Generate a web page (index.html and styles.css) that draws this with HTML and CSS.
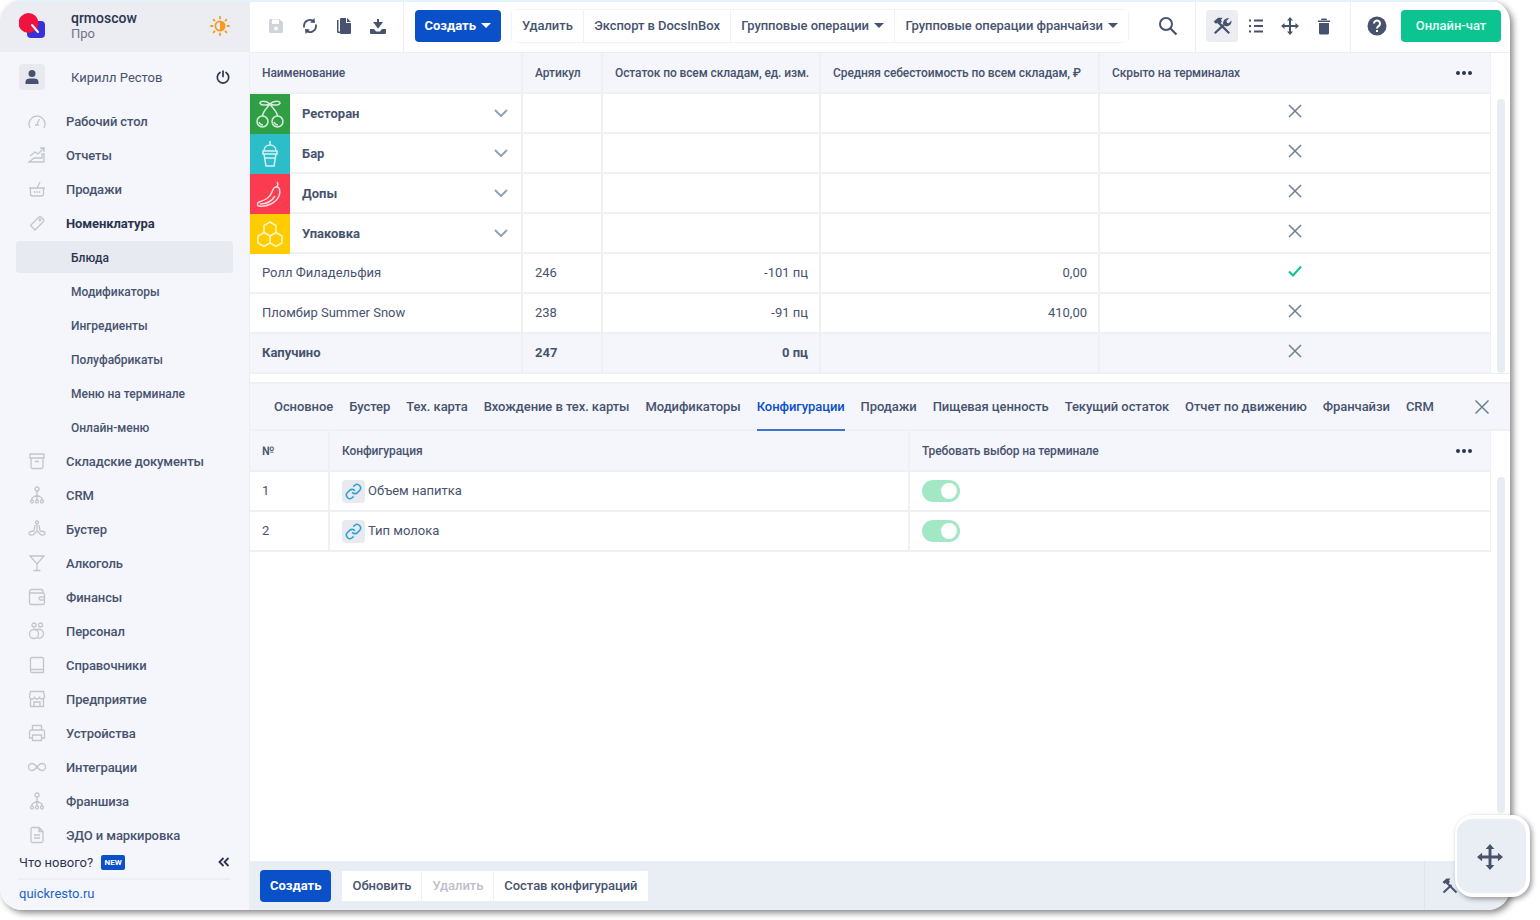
FILE: index.html
```html
<!DOCTYPE html>
<html lang="ru">
<head>
  <meta charset="UTF-8">
  <title>Номенклатура</title>
  <link rel="stylesheet" href="styles.css">
</head>
<body>
  <div class="window">
    <aside class="sidebar">
      <div class="brand">
        <svg class="logo" width="28" height="28" viewBox="0 0 28 28"><rect x="8" y="9" width="18" height="17" rx="4" fill="#3b2fd6"/><circle cx="9.500" cy="11" r="10" fill="#f0123f"/><path d="M13 13l6 7" stroke="#fff" stroke-width="2" stroke-linecap="round"/></svg>
        <div class="brand-text">
          <div class="brand-name">qrmoscow</div>
          <div class="brand-plan">Про</div>
        </div>
        <svg class="sun" width="20" height="20" viewBox="0 0 20 20"><circle cx="10" cy="10" r="4.600" fill="none" stroke="#f59a23" stroke-width="1.800"/><path d="M10 5.400a4.600 4.600 0 0 1 0 9.200z" fill="#f59a23"/><path d="M10 1v1.500M10 17.500V19M1 10h1.500M17.500 10H19M3.600 3.600l1 1M15.400 15.400l1 1M3.600 16.400l1-1M15.400 4.600l1-1" stroke="#f59a23" stroke-width="1.800" stroke-linecap="round"/></svg>
      </div>
      <div class="user">
        <span class="avatar"><svg width="16" height="16" viewBox="0 0 16 16"><circle cx="8" cy="4.500" r="3.500" fill="#47536e"/><path d="M1.500 15v-2c0-2.500 2-3.500 4-3.500h5c2 0 4 1 4 3.500v2z" fill="#47536e"/></svg></span>
        <span class="user-name">Кирилл Рестов</span>
        <svg width="14" height="14" viewBox="0 0 14 14"><path d="M4 2.500a5.700 5.700 0 1 0 6 0" fill="none" stroke="#2b3550" stroke-width="1.700" stroke-linecap="round"/><path d="M7 1v5.500" stroke="#2b3550" stroke-width="1.700" stroke-linecap="round"/></svg>
      </div>
      <nav class="nav">
        <a class="nav-item"><svg class="nav-icon" viewBox="0 0 20 20"><path d="M3 17a8 8 0 1 1 14 0M10 13l2.500-5M8 14h4"/></svg>Рабочий стол</a>
        <a class="nav-item"><svg class="nav-icon" viewBox="0 0 20 20"><path d="M3 11l5-4 3 2 6-6M13 3h4v4M2 17l5-4h8V9h2v8z"/></svg>Отчеты</a>
        <a class="nav-item"><svg class="nav-icon" viewBox="0 0 20 20"><path d="M2 9h16M3.500 9v6a2 2 0 0 0 2 2h9a2 2 0 0 0 2-2V9M13 3l-3 6M7.500 12v2M10 12v2M12.500 12v2"/></svg>Продажи</a>
        <a class="nav-item is-bold"><svg class="nav-icon" viewBox="0 0 20 20"><path d="M3.500 12.500l8-8c1-1 2-1 3 0l1.500 1.500c1 1 1 2 0 3l-8 8z"/><circle cx="13" cy="7" r=".8"/></svg>Номенклатура</a>
        <a class="nav-sub is-active">Блюда</a>
        <a class="nav-sub">Модификаторы</a>
        <a class="nav-sub">Ингредиенты</a>
        <a class="nav-sub">Полуфабрикаты</a>
        <a class="nav-sub">Меню на терминале</a>
        <a class="nav-sub">Онлайн-меню</a>
        <a class="nav-item"><svg class="nav-icon" viewBox="0 0 20 20"><path d="M3 3h14v4H3zM4 7v9a1.500 1.500 0 0 0 1.500 1.500h9A1.500 1.500 0 0 0 16 16V7M8 10.500h4"/></svg>Складские документы</a>
        <a class="nav-item"><svg class="nav-icon" viewBox="0 0 20 20"><circle cx="10" cy="4" r="2"/><path d="M10 6v4M5 15v-2l5-3 5 3v2M10 10v5"/><circle cx="5" cy="16.500" r="1.500"/><circle cx="10" cy="16.500" r="1.500"/><circle cx="15" cy="16.500" r="1.500"/></svg>CRM</a>
        <a class="nav-item"><svg class="nav-icon" viewBox="0 0 20 20"><circle cx="10" cy="3.500" r="1.500"/><path d="M10 5v7M8 6l-1 6c-3 0-5 1-5 2.500S5 17 7 15l3-3 3 3c2 2 5 1 5-.5S16 12 13 12l-1-6"/></svg>Бустер</a>
        <a class="nav-item"><svg class="nav-icon" viewBox="0 0 20 20"><path d="M3 3h14l-7 8zM10 11v6M6.500 17.500h7"/></svg>Алкоголь</a>
        <a class="nav-item"><svg class="nav-icon" viewBox="0 0 20 20"><path d="M16 6V4a1.500 1.500 0 0 0-1.500-1.500h-10A2 2 0 0 0 2.500 4.500v11A2 2 0 0 0 4.500 17.500h11a2 2 0 0 0 2-2V8a2 2 0 0 0-2-2zM2.500 6H16M18 10h-4.500a1.500 1.500 0 0 0 0 3H18"/></svg>Финансы</a>
        <a class="nav-item"><svg class="nav-icon" viewBox="0 0 20 20"><circle cx="7" cy="4" r="2"/><circle cx="13.500" cy="4" r="2"/><circle cx="7" cy="13" r="4.500"/><path d="M10.500 8.500a4.500 4.500 0 1 1 0 8.500M6 8.500h8"/></svg>Персонал</a>
        <a class="nav-item"><svg class="nav-icon" viewBox="0 0 20 20"><path d="M5 2.500h10a1.500 1.500 0 0 1 1.500 1.500v13.500H5A1.500 1.500 0 0 1 3.500 16V4A1.500 1.500 0 0 1 5 2.500zM3.500 14.500H16.500"/></svg>Справочники</a>
        <a class="nav-item"><svg class="nav-icon" viewBox="0 0 20 20"><path d="M3.500 2.500h13l1 5a2.500 2.500 0 0 1-5 0 2.500 2.500 0 0 1-5 0 2.500 2.500 0 0 1-5 0zM3.500 10v7.500h13V10M7 17.500V13h6v4.500"/></svg>Предприятие</a>
        <a class="nav-item"><svg class="nav-icon" viewBox="0 0 20 20"><path d="M5.500 7V2.500h9V7M5.500 15H2.500V9a2 2 0 0 1 2-2h11a2 2 0 0 1 2 2v6h-3M5.500 12h9v5.500h-9z"/></svg>Устройства</a>
        <a class="nav-item"><svg class="nav-icon" viewBox="0 0 20 20"><path d="M10 10c-2-2.500-3.500-3.500-5-3.500a3.500 3.500 0 0 0 0 7c1.500 0 3-1 5-3.500s3.500-3.500 5-3.500a3.500 3.500 0 0 1 0 7c-1.500 0-3-1-5-3.500z"/></svg>Интеграции</a>
        <a class="nav-item"><svg class="nav-icon" viewBox="0 0 20 20"><circle cx="10" cy="4" r="2"/><path d="M10 6v4M5 15v-2l5-3 5 3v2M10 10v5"/><circle cx="5" cy="16.500" r="1.500"/><circle cx="10" cy="16.500" r="1.500"/><circle cx="15" cy="16.500" r="1.500"/></svg>Франшиза</a>
        <a class="nav-item"><svg class="nav-icon" viewBox="0 0 20 20"><path d="M5 2.500h7l4 4V16a1.500 1.500 0 0 1-1.500 1.500h-9A1.500 1.500 0 0 1 4 16V4A1.500 1.500 0 0 1 5 2.500zM12 2.500v4h4M7 10h6M7 13h6"/></svg>ЭДО и маркировка</a>
      </nav>
      <div class="side-foot">
        <div class="news">
          <span>Что нового?</span>
          <span class="badge">NEW</span>
          <svg class="collapse" width="12" height="10" viewBox="0 0 12 10"><path d="M5.500 1L1.500 5l4 4M10.500 1l-4 4 4 4" fill="none" stroke="#2b3550" stroke-width="1.800"/></svg>
        </div>
        <a class="site-link">quickresto.ru</a>
      </div>
    </aside>

    <main class="content">
      <header class="toolbar">
        <div class="tool-group">
          <svg class="tool" viewBox="0 0 18 18"><path d="M2 3.500A1.500 1.500 0 0 1 3.500 2h9L16 5.500v9a1.500 1.500 0 0 1-1.500 1.500h-11A1.500 1.500 0 0 1 2 14.500zM5 2.500V7h7V2.500z" fill="#cfd3da" fill-rule="evenodd"/><circle cx="9" cy="11.500" r="2" fill="#fff"/></svg>
          <svg class="tool" viewBox="0 0 18 18"><path d="M3 10.500V9a6 6 0 0 1 9.500-4.900M15 7.500V9a6 6 0 0 1-9.500 4.900" fill="none" stroke="#47536e" stroke-width="1.800"/><path d="M13.500 1l.5 5-5-.5zM4.500 17l-.5-5 5 .5z" fill="#47536e"/></svg>
          <svg class="tool" viewBox="0 0 18 18"><path d="M2 3h1.500v11.500H11V16H3.500A1.500 1.500 0 0 1 2 14.500z" fill="#47536e"/><path d="M6 1h5v5h5v10a1 1 0 0 1-1 1H6a1 1 0 0 1-1-1V2a1 1 0 0 1 1-1zM12 1l4 4h-4z" fill="#47536e"/></svg>
          <svg class="tool" viewBox="0 0 18 18"><path d="M9 2v6M6 6l3 4 3-4z" fill="#47536e" stroke="#47536e" stroke-width="2"/><path d="M1 12h4l2 2.500h4l2-2.500h4v4a1 1 0 0 1-1 1H2a1 1 0 0 1-1-1z" fill="#47536e"/></svg>
        </div>
        <div class="action-group">
          <button class="btn-primary">Создать <span class="caret"></span></button>
          <div class="btn-row">
            <button class="btn">Удалить</button>
            <button class="btn">Экспорт в DocsInBox</button>
            <button class="btn">Групповые операции <span class="caret is-dark"></span></button>
            <button class="btn">Групповые операции франчайзи <span class="caret is-dark"></span></button>
          </div>
          <svg class="search" width="20" height="20" viewBox="0 0 20 20"><circle cx="8" cy="8" r="6" fill="none" stroke="#47536e" stroke-width="2"/><path d="M12.500 12.500L18.500 18.500" stroke="#47536e" stroke-width="2.200"/></svg>
        </div>
        <div class="tool-group is-view">
          <span class="tool-on"><svg class="tool-big" viewBox="0 0 18 18"><path d="M5.500 5.500L15.500 15.500" stroke="#47536e" stroke-width="2" fill="none"/><path d="M1.500 5L5.500 1.500H9.500L8 3.500 9 5 6.500 7.500 5 6 3.500 7z" fill="#47536e"/><path d="M2.500 15.500L10.500 8" stroke="#47536e" stroke-width="2" fill="none"/><path d="M10 7.500C9.500 4 12 1.500 15.500 2L13 4.500l.5 1.500 1.500.5L17.500 4C18 7.500 15 10 11.500 9z" fill="#47536e"/></svg></span>
          <svg class="tool" viewBox="0 0 18 18"><path d="M7 3.500h9M7 9h9M7 14.500h9" stroke="#47536e" stroke-width="1.800"/><path d="M2 2.500h2v2H2zM2 8h2v2H2zM2 13.500h2v2H2z" fill="#47536e"/></svg>
          <svg class="tool" viewBox="0 0 18 18"><path d="M9 0l3 3.500H10V8h4.500V6L18 9l-3.500 3v-2H10v4.500h2L9 18l-3-3.500h2V10H3.500v2L0 9l3.500-3v2H8V3.500H6z" fill="#47536e"/></svg>
          <svg class="tool" viewBox="0 0 18 18"><path d="M3 3.500h12V5H3zM6.500 1.500h5l.5 1.500H6zM4 6h10v10a1.500 1.500 0 0 1-1.500 1.500h-7A1.500 1.500 0 0 1 4 16z" fill="#47536e"/></svg>
        </div>
        <div class="help-group">
          <svg class="help" width="20" height="20" viewBox="0 0 20 20"><circle cx="10" cy="10" r="9.500" fill="#47536e"/><path d="M7 7.500a3 3 0 1 1 4.500 2.600c-1 .6-1.500 1-1.500 2.400" fill="none" stroke="#fff" stroke-width="2"/><rect x="9" y="14" width="2" height="2" fill="#fff"/></svg>
          <button class="btn-chat">Онлайн-чат</button>
        </div>
      </header>

      <section class="upper">
        <table class="grid grid-top">
          <colgroup><col class="c-name"><col class="c-art"><col class="c-stock"><col class="c-cost"><col></colgroup>
          <thead>
            <tr>
              <th>Наименование</th>
              <th>Артикул</th>
              <th>Остаток по всем складам, ед. изм.</th>
              <th>Средняя себестоимость по всем складам, ₽</th>
              <th class="has-more">Скрыто на терминалах<span class="more"><i></i><i></i><i></i></span></th>
            </tr>
          </thead>
          <tbody>
            <tr>
              <td class="folder">
                <div class="folder-cell">
                  <span class="tile tile-green"><svg class="tile-icon" viewBox="0 0 30 30"><circle cx="7.500" cy="22.500" r="5.500"/><circle cx="22.500" cy="22.500" r="5.500"/><path d="M7.500 17C8 12 12 9 15 5c2 4 7 7 7.500 12M15 5C11 1 5 2 5 4s6 3 10 1c4-4 10-3 10-1s-6 3-10 1M4 23c1 2 2 3 4 3M19 23c1 2 2 3 4 3"/></svg></span>
                  <b>Ресторан</b>
                  <svg class="chev" width="14" height="8" viewBox="0 0 14 8"><path d="M1 1l6 6 6-6"/></svg>
                </div>
              </td>
              <td></td><td></td><td></td>
              <td class="mark"><svg class="cross" viewBox="0 0 14 14"><path d="M1 1l12 12M13 1L1 13"/></svg></td>
            </tr>
            <tr>
              <td class="folder">
                <div class="folder-cell">
                  <span class="tile tile-cyan"><svg class="tile-icon" viewBox="0 0 30 30"><path d="M8 12h14v3H8zM9 15l2 12h8l2-12M9 12c0-4 3-6 6-6s6 2 6 6M15 6V2M10 19h10"/></svg></span>
                  <b>Бар</b>
                  <svg class="chev" width="14" height="8" viewBox="0 0 14 8"><path d="M1 1l6 6 6-6"/></svg>
                </div>
              </td>
              <td></td><td></td><td></td>
              <td class="mark"><svg class="cross" viewBox="0 0 14 14"><path d="M1 1l12 12M13 1L1 13"/></svg></td>
            </tr>
            <tr>
              <td class="folder">
                <div class="folder-cell">
                  <span class="tile tile-red"><svg class="tile-icon" viewBox="0 0 30 30"><path d="M21 8c-2 0-3 2-4 5-2 6-7 8-13 10-2 1-2 4 0 4 8 1 17-3 20-10 1-3 1-6 0-8-1-1-2-1-3-1zM22 8c1-2 1-4 0-5M5 25c6 0 12-3 15-8"/></svg></span>
                  <b>Допы</b>
                  <svg class="chev" width="14" height="8" viewBox="0 0 14 8"><path d="M1 1l6 6 6-6"/></svg>
                </div>
              </td>
              <td></td><td></td><td></td>
              <td class="mark"><svg class="cross" viewBox="0 0 14 14"><path d="M1 1l12 12M13 1L1 13"/></svg></td>
            </tr>
            <tr>
              <td class="folder">
                <div class="folder-cell">
                  <span class="tile tile-yellow"><svg class="tile-icon" viewBox="0 0 30 30"><path d="M15 3l6 3.500v7L15 17l-6-3.500v-7zM9 13.500l6 3.500v7l-6 3.500-6-3.500v-7zM21 13.500l6 3.500v7l-6 3.500-6-3.500v-7z"/></svg></span>
                  <b>Упаковка</b>
                  <svg class="chev" width="14" height="8" viewBox="0 0 14 8"><path d="M1 1l6 6 6-6"/></svg>
                </div>
              </td>
              <td></td><td></td><td></td>
              <td class="mark"><svg class="cross" viewBox="0 0 14 14"><path d="M1 1l12 12M13 1L1 13"/></svg></td>
            </tr>
            <tr>
              <td>Ролл Филадельфия</td><td>246</td><td class="num">-101 пц</td><td class="num">0,00</td>
              <td class="mark"><svg class="check" viewBox="0 0 14 12"><path d="M1 6.500L5 10.500 13 1.500"/></svg></td>
            </tr>
            <tr>
              <td>Пломбир Summer Snow</td><td>238</td><td class="num">-91 пц</td><td class="num">410,00</td>
              <td class="mark"><svg class="cross" viewBox="0 0 14 14"><path d="M1 1l12 12M13 1L1 13"/></svg></td>
            </tr>
            <tr class="row-sel">
              <td>Капучино</td><td>247</td><td class="num">0 пц</td><td></td>
              <td class="mark"><svg class="cross" viewBox="0 0 14 14"><path d="M1 1l12 12M13 1L1 13"/></svg></td>
            </tr>
          </tbody>
        </table>
        <div class="scroll scroll-top"><span></span></div>
      </section>

      <section class="lower">
        <div class="tabs">
          <a class="tab">Основное</a>
          <a class="tab">Бустер</a>
          <a class="tab">Тех. карта</a>
          <a class="tab">Вхождение в тех. карты</a>
          <a class="tab">Модификаторы</a>
          <a class="tab is-active">Конфигурации</a>
          <a class="tab">Продажи</a>
          <a class="tab">Пищевая ценность</a>
          <a class="tab">Текущий остаток</a>
          <a class="tab">Отчет по движению</a>
          <a class="tab">Франчайзи</a>
          <a class="tab">CRM</a>
          <svg class="tabs-close" width="16" height="16" viewBox="0 0 16 16"><path d="M1.500 1.500l13 13M14.500 1.500l-13 13" stroke="#6d7f94" stroke-width="1.500"/></svg>
        </div>
        <div class="lower-body">
          <table class="grid grid-sub">
            <colgroup><col class="c-no"><col class="c-conf"><col></colgroup>
            <thead>
              <tr>
                <th>№</th>
                <th>Конфигурация</th>
                <th class="has-more">Требовать выбор на терминале<span class="more"><i></i><i></i><i></i></span></th>
              </tr>
            </thead>
            <tbody>
              <tr>
                <td>1</td>
                <td class="conf-cell"><span class="conf"><span class="link-box"><svg width="17" height="17" viewBox="0 0 24 24"><path d="M10 13a5 5 0 0 0 7.540.54l3-3a5 5 0 0 0-7.070-7.070l-1.720 1.710"/><path d="M14 11a5 5 0 0 0-7.540-.54l-3 3a5 5 0 0 0 7.070 7.070l1.710-1.710"/></svg></span><span class="conf-name">Объем напитка</span></span></td>
                <td class="switch-cell"><span class="switch"></span></td>
              </tr>
              <tr>
                <td>2</td>
                <td class="conf-cell"><span class="conf"><span class="link-box"><svg width="17" height="17" viewBox="0 0 24 24"><path d="M10 13a5 5 0 0 0 7.540.54l3-3a5 5 0 0 0-7.070-7.070l-1.720 1.710"/><path d="M14 11a5 5 0 0 0-7.540-.54l-3 3a5 5 0 0 0 7.070 7.070l1.710-1.710"/></svg></span><span class="conf-name">Тип молока</span></span></td>
                <td class="switch-cell"><span class="switch"></span></td>
              </tr>
            </tbody>
          </table>
          <div class="scroll scroll-sub"><span></span></div>
        </div>
      </section>

      <footer class="bottom">
        <button class="btn-primary">Создать</button>
        <div class="btn-row is-flat">
          <button class="btn">Обновить</button>
          <button class="btn is-off">Удалить</button>
          <button class="btn">Состав конфигураций</button>
        </div>
        <div class="bottom-tools">
          <svg class="tool" viewBox="0 0 18 18"><path d="M5.500 5.500L15.500 15.500" stroke="#47536e" stroke-width="2" fill="none"/><path d="M1.500 5L5.500 1.500H9.500L8 3.500 9 5 6.500 7.500 5 6 3.500 7z" fill="#47536e"/><path d="M2.500 15.500L10.500 8" stroke="#47536e" stroke-width="2" fill="none"/></svg>
        </div>
      </footer>
    </main>

    <div class="float-move">
      <svg class="float-icon" width="26" height="26" viewBox="0 0 18 18"><path d="M9 0l3 3.500H10V8h4.500V6L18 9l-3.500 3v-2H10v4.500h2L9 18l-3-3.500h2V10H3.500v2L0 9l3.500-3v2H8V3.500H6z" fill="#47536e"/></svg>
    </div>
  </div>
</body>
</html>
```

FILE: styles.css
```css
* {
  box-sizing: border-box;
}
html, body {
  margin: 0;
  height: 100%;
}
body {
  background-color: #fff;
  font-family: Roboto, "Noto Sans", sans-serif;
  font-size: 13px;
  color: #47536e;
  overflow: hidden;
}
button {
  font: inherit;
  cursor: pointer;
}
.window {
  position: relative;
  display: flex;
  width: 1510px;
  height: 910px;
  border-radius: 22px;
  background-color: #fff;
  box-shadow: 3px 3px 6px rgba(60, 60, 60, 0.6);
}

/* sidebar */
.sidebar {
  width: 250px;
  flex: none;
  display: flex;
  flex-direction: column;
  background-color: #f5f6fb;
  border-right: 1px solid #eceef3;
  border-radius: 22px 0 0 22px;
  overflow: hidden;
}
.brand {
  height: 52px;
  flex: none;
  display: flex;
  align-items: center;
  padding: 0 19px;
  background-color: #ecedf2;
  box-shadow: inset 0 2px 0 #e3f3fc;
}
.logo {
  flex: none;
}
.brand-text {
  flex: 1;
  margin-left: 24px;
  line-height: 15px;
}
.brand-name {
  font-size: 14px;
  font-weight: 500;
  color: #2b3550;
}
.brand-plan {
  font-size: 13px;
  color: #6d7588;
}
.user {
  height: 50px;
  flex: none;
  display: flex;
  align-items: center;
  padding: 0 19px;
}
.avatar {
  width: 26px;
  height: 26px;
  flex: none;
  display: flex;
  align-items: center;
  justify-content: center;
  border-radius: 4px;
  background-color: #e8eaf0;
}
.user-name {
  flex: 1;
  margin-left: 26px;
}
.nav {
  flex: 1;
  display: flex;
  flex-direction: column;
  padding-top: 2px;
  overflow: hidden;
}
.nav-item {
  height: 34px;
  flex: none;
  display: flex;
  align-items: center;
  padding-left: 27px;
  font-weight: 500;
  color: #47536e;
  letter-spacing: -0.1px;
}
.nav-item.is-bold {
  color: #2b3550;
  font-weight: 700;
}
.nav-icon {
  width: 20px;
  height: 20px;
  flex: none;
  margin-right: 19px;
  fill: none;
  stroke: #c2c5ce;
  stroke-width: 1.300;
}
.nav-sub {
  height: 32px;
  flex: none;
  margin: 1px 16px;
  display: flex;
  align-items: center;
  padding: 1px 0 0 55px;
  border-radius: 4px;
  font-size: 12px;
  font-weight: 500;
  color: #47536e;
}
.nav-sub.is-active {
  background-color: #e8eaf1;
  color: #2b3550;
}
.side-foot {
  flex: none;
  height: 60px;
  padding: 0 19px;
  background-color: #f5f6fb;
}
.news {
  height: 30px;
  display: flex;
  align-items: center;
  padding-bottom: 4px;
  border-bottom: 2px solid #eceef3;
  color: #2b3550;
}
.badge {
  width: 24px;
  height: 15px;
  margin-left: 8px;
  border-radius: 2px;
  background-color: #0a50c8;
  color: #fff;
  font-size: 8px;
  font-weight: 700;
  line-height: 15px;
  text-align: center;
}
.collapse {
  margin-left: auto;
}
.site-link {
  display: block;
  margin-top: 6px;
  color: #1b62c8;
}

/* main area */
.content {
  flex: 1;
  min-width: 0;
  display: flex;
  flex-direction: column;
  border-radius: 0 22px 22px 0;
  overflow: hidden;
}
.toolbar {
  height: 53px;
  flex: none;
  display: flex;
  align-items: stretch;
  border-bottom: 1px solid #eceef3;
  box-shadow: inset 0 2px 0 #e3f3fc;
}
.tool-group {
  width: 154px;
  flex: none;
  display: flex;
  align-items: center;
  gap: 16px;
  padding: 0 0 0 17px;
  border-right: 1px solid #eceef3;
}
.tool {
  width: 18px;
  height: 18px;
  flex: none;
}
.tool-big {
  width: 20px;
  height: 20px;
}
.action-group {
  width: 792px;
  flex: none;
  display: flex;
  align-items: center;
  padding-left: 11px;
  border-right: 1px solid #eceef3;
}
.btn-primary {
  height: 32px;
  padding: 0 9.500px 1px;
  border: 0;
  border-radius: 4px;
  background-color: #0a50c8;
  color: #fff;
  font-weight: 700;
}
.caret {
  display: inline-block;
  margin-left: 2px;
  vertical-align: 2px;
  border-left: 5px solid transparent;
  border-right: 5px solid transparent;
  border-top: 5px solid #fff;
}
.caret.is-dark {
  border-top-color: #47536e;
}
.btn-row {
  display: flex;
  height: 32px;
  margin-left: 11px;
  border-radius: 4px;
  box-shadow: 0 0 2px rgba(70, 80, 110, 0.25);
}
.btn {
  height: 100%;
  padding: 0 10.200px 2px;
  border: 0;
  border-right: 1px solid #eef0f4;
  background-color: #fff;
  color: #47536e;
  white-space: nowrap;
  font-weight: 500;
  letter-spacing: -0.05px;
}
.btn:last-child {
  border-right: 0;
}
.btn.is-off {
  color: #bcc0ca;
}
.search {
  margin-left: 30px;
}
.tool-group.is-view {
  width: 155px;
  gap: 16px;
  padding-left: 10px;
}
.tool-on {
  width: 32px;
  height: 32px;
  margin-right: -7px;
  display: flex;
  align-items: center;
  justify-content: center;
  border-radius: 4px;
  background-color: #ecedf2;
}
.help-group {
  flex: 1;
  display: flex;
  align-items: center;
  padding-left: 16px;
}
.btn-chat {
  height: 32px;
  width: 100px;
  margin-left: 14px;
  padding-bottom: 2px;
  border: 0;
  border-radius: 4px;
  background-color: #0bc48f;
  color: #e8fff8;
  font-weight: 500;
}

/* tables */
.upper {
  position: relative;
  height: 321px;
  flex: none;
  padding-right: 19px;
  border-bottom: 1px solid #eceef3;
}
.grid {
  width: 100%;
  table-layout: fixed;
  border-collapse: collapse;
}
.c-name { width: 272px; }
.c-art { width: 80px; }
.c-stock { width: 218px; }
.c-cost { width: 279px; }
.c-no { width: 79px; }
.c-conf { width: 580px; }
.grid th, .grid td {
  height: 40px;
  padding: 0 12px;
  border: 2px solid #eef0f4;
  border-width: 0 2px 2px 0;
  text-align: left;
  white-space: nowrap;
  font-weight: 400;
}
.grid td {
  padding-bottom: 2px;
}
.grid th {
  background-color: #f5f6fb;
  font-size: 12px;
  color: #47536e;
  font-weight: 500;
  letter-spacing: -0.1px;
}
.grid td:last-child, .grid th:last-child {
  border-right-width: 1px;
}
.has-more {
  position: relative;
}
.more {
  position: absolute;
  right: 18px;
  top: 18px;
  display: flex;
  gap: 2px;
}
.more i {
  width: 4px;
  height: 4px;
  border-radius: 50%;
  background-color: #2b3550;
}
.grid td.folder {
  padding: 0;
}
.folder-cell {
  display: flex;
  align-items: center;
  height: 38px;
  padding-right: 13px;
}
.folder-cell b {
  flex: 1;
  margin-left: 12px;
  font-weight: 700;
}
.tile {
  width: 40px;
  height: 40px;
  flex: none;
  margin-top: 1px;
  margin-bottom: -1px;
  display: flex;
  align-items: center;
  justify-content: center;
}
.tile-green { background-color: #2f9e44; }
.tile-cyan { background-color: #2cbdc9; }
.tile-red { background-color: #fa3b50; }
.tile-yellow { background-color: #ffcc00; }
.tile-icon {
  width: 30px;
  height: 30px;
  fill: none;
  stroke: rgba(255, 255, 255, 0.8);
  stroke-width: 1.500;
}
.chev {
  fill: none;
  stroke: #8fa3b6;
  stroke-width: 2;
}
.grid td.num {
  padding-right: 11px;
  text-align: right;
}
.grid td.mark {
  padding: 0;
  text-align: center;
}
.cross, .check {
  display: block;
  margin: -4px auto 0;
  width: 14px;
  height: 14px;
  fill: none;
  stroke: #6d7f94;
  stroke-width: 1.500;
}
.check {
  height: 12px;
  stroke: #0bc48f;
  stroke-width: 2;
}
.row-sel td {
  background-color: #f5f6fb;
  font-weight: 700;
}
.scroll {
  position: absolute;
  top: 40px;
  right: 0;
  bottom: 0;
  width: 20px;
}
.scroll span {
  position: absolute;
  top: 6px;
  bottom: 0;
  left: 7px;
  width: 8px;
  border-radius: 4px;
  background-color: #e8edf4;
}
.scroll-sub {
  bottom: 48px;
}
.lower {
  flex: 1;
  min-height: 0;
  display: flex;
  flex-direction: column;
  margin-top: 8px;
  border-top: 2px solid #eef0f4;
}
.tabs {
  height: 47px;
  flex: none;
  display: flex;
  align-items: stretch;
  gap: 16px;
  padding: 0 20px 0 24px;
  background-color: #f5f6fb;
  border-bottom: 2px solid #eef0f4;
}
.tab {
  display: flex;
  align-items: center;
  border-bottom: 2px solid transparent;
  margin-bottom: -2px;
  font-weight: 500;
  letter-spacing: -0.07px;
  white-space: nowrap;
}
.tab.is-active {
  color: #0a50c8;
  border-bottom-color: #3a76d0;
}
.tabs-close {
  margin: auto 0 auto auto;
}
.lower-body {
  position: relative;
  flex: 1;
  min-height: 0;
  padding-right: 19px;
}
.grid td.conf-cell, .grid td.switch-cell {
  padding-bottom: 0;
}
.conf {
  display: flex;
  align-items: center;
  gap: 3px;
}
.conf-name {
  margin-top: -2px;
}
.link-box {
  width: 23px;
  height: 23px;
  display: flex;
  align-items: center;
  justify-content: center;
  border-radius: 4px;
  background-color: #e8eaf0;
}
.link-box svg {
  fill: none;
  stroke: #2ba3d6;
  stroke-width: 2.200;
}
.switch {
  position: relative;
  display: block;
  width: 38px;
  height: 22px;
  border-radius: 11px;
  background-color: #a3e8c4;
}
.switch::after {
  content: "";
  position: absolute;
  top: 3px;
  right: 3px;
  width: 16px;
  height: 16px;
  border-radius: 50%;
  background-color: #fff;
}
.bottom {
  height: 49px;
  flex: none;
  display: flex;
  align-items: center;
  padding-left: 10px;
  background-color: #e9eef5;
}
.bottom .btn-primary {
  padding: 0 10px 1px;
}
.bottom .btn-row {
  height: 30px;
  margin-left: 11px;
  box-shadow: none;
}
.bottom .btn {
  padding: 0 10px;
}
.bottom-tools {
  height: 100%;
  width: 86px;
  margin-left: auto;
  padding: 16px 0 0 16px;
  border-left: 1px solid #e0e5ec;
}
.float-move {
  position: absolute;
  left: 1455px;
  top: 815px;
  width: 75px;
  height: 82px;
  display: flex;
  align-items: center;
  justify-content: center;
  border: 4px solid #fff;
  border-left-width: 2px;
  border-radius: 18px;
  background-color: #e9eef5;
  box-shadow: 2px 2px 5px rgba(60, 60, 60, 0.5);
}
.float-icon {
  margin: 2px 3px 0 0;
}
```
